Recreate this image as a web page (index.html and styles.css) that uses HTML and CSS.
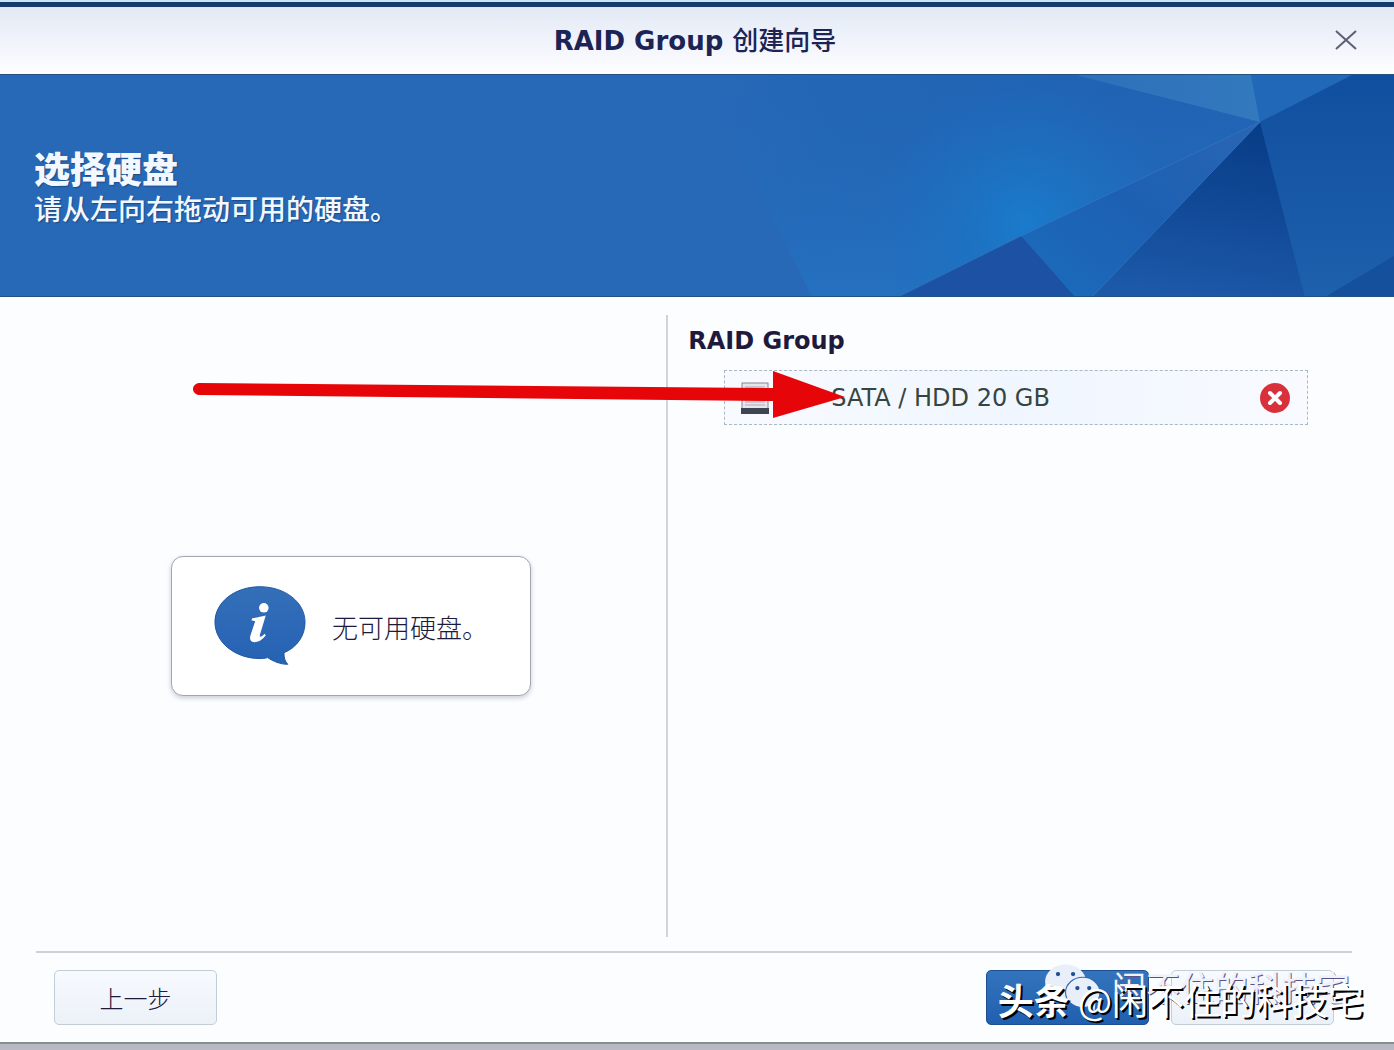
FILE: index.html
```html
<!DOCTYPE html>
<html lang="zh-CN">

<head>
  <meta charset="UTF-8">
  <title>RAID Group 创建向导</title>
  <link rel="stylesheet" href="styles.css">
</head>

<body>
  <div class="wizard">
    <header class="title-bar">
      <h1>RAID Group <span>创建向导</span></h1>
      <button class="close-btn" aria-label="关闭">
        <svg width="22" height="20" viewBox="0 0 22 20">
          <path d="M1 1L21 19M21 1L1 19" stroke="#5d5f72" stroke-width="2" fill="none" />
        </svg>
      </button>
    </header>

    <section class="banner">
      <svg class="banner-art" viewBox="0 0 734 223" preserveAspectRatio="xMaxYMid slice">
        <defs>
          <linearGradient id="sweep" gradientUnits="userSpaceOnUse" x1="60" y1="40" x2="440" y2="120">
            <stop offset="0" stop-color="#2768b7" />
            <stop offset="0.3" stop-color="#2266b5" />
            <stop offset="1" stop-color="#2062b3" />
          </linearGradient>
          <radialGradient id="glow" gradientUnits="userSpaceOnUse" cx="365" cy="150" r="150">
            <stop offset="0" stop-color="#1a7bcc" />
            <stop offset="0.4" stop-color="#1b74c4" stop-opacity="0.7" />
            <stop offset="1" stop-color="#1b6fc0" stop-opacity="0" />
          </radialGradient>
          <linearGradient id="corner" x1="0.3" y1="0" x2="0.4" y2="1">
            <stop offset="0" stop-color="#2468b8" stop-opacity="0" />
            <stop offset="1" stop-color="#2571c0" />
          </linearGradient>
          <linearGradient id="top" x1="0" y1="0" x2="1" y2="0">
            <stop offset="0" stop-color="#2e70bb" />
            <stop offset="1" stop-color="#3279bd" />
          </linearGradient>
          <linearGradient id="mid" x1="1" y1="0" x2="0" y2="1">
            <stop offset="0" stop-color="#2a65b4" />
            <stop offset="0.5" stop-color="#1d60b2" />
            <stop offset="1" stop-color="#1b6cbc" />
          </linearGradient>
          <linearGradient id="dark" x1="0.6" y1="0" x2="0.4" y2="1">
            <stop offset="0" stop-color="#083d87" />
            <stop offset="0.5" stop-color="#124a98" />
            <stop offset="1" stop-color="#1c59a8" />
          </linearGradient>
          <linearGradient id="side" x1="0" y1="0" x2="0" y2="1">
            <stop offset="0" stop-color="#104f9f" />
            <stop offset="1" stop-color="#1e60ac" />
          </linearGradient>
        </defs>
        <path d="M40 0H734V223H152Z" fill="url(#sweep)" />
        <path d="M40 0H600V48L238 223H152Z" fill="url(#corner)" />
        <path d="M152 0H600V48L361 162L238 223H152Z" fill="url(#glow)" />
        <path d="M412 0H591L600 48Z" fill="url(#top)" />
        <path d="M591 0H694L600 48Z" fill="#2169b8" />
        <path d="M694 0H734V223H645L600 48Z" fill="url(#side)" />
        <path d="M734 182V223H665Z" fill="#14509c" />
        <path d="M600 48L645 223H432Z" fill="url(#dark)" />
        <path d="M600 48L432 223H415L361 162Z" fill="url(#mid)" />
        <path d="M361 162L415 223H238Z" fill="#1c51a3" />
        <path d="M238 223L361 162L600 48L432 223" fill="none" stroke="#3b7dc4" stroke-opacity="0.5" />
      </svg>
      <div class="banner-text">
        <h2>选择硬盘</h2>
        <p>请从左向右拖动可用的硬盘。</p>
      </div>
    </section>

    <main class="content">
      <section class="available">
        <div class="message">
          <svg width="96" height="84" viewBox="0 0 96 84">
            <defs>
              <linearGradient id="bubble" x1="0" y1="0" x2="0" y2="1">
                <stop offset="0" stop-color="#346fb9" />
                <stop offset="1" stop-color="#2562b3" />
              </linearGradient>
            </defs>
            <path d="M48 1C74 1 95 17 95 38C95 52 87 64 73 70C73 75 74 79 77 82C69 82 62 79 56 75C53 76 50 76 48 76C22 76 1 59 1 38C1 17 22 1 48 1Z" fill="url(#bubble)" stroke="#1c559f" />
            <circle cx="52" cy="23" r="5" fill="#fff" />
            <path d="M40 34C45 33 49 32 54 31L48 51C47 54 49 54 53 50L54 52C50 57 46 59 42 59C38 59 37 56 38 52L43 37L39 36Z" fill="#fff" />
          </svg>
          <p>无可用硬盘。</p>
        </div>
      </section>

      <section class="group">
        <h3>RAID Group</h3>
        <div class="disk">
          <svg width="28" height="32" viewBox="0 0 28 32">
            <rect x="1" y="1" width="26" height="30" fill="#e6e4ec" stroke="#85869a" />
            <path d="M4 5H24M4 20H24M4 23H24" stroke="#b4a9b4" />
            <rect x="0" y="26" width="28" height="6" fill="#3f4550" />
          </svg>
          <span class="disk-name">SATA / HDD 20 GB</span>
          <button class="remove-btn" aria-label="移除">
            <svg width="32" height="32" viewBox="0 0 32 32">
              <circle cx="16" cy="16" r="15" fill="#d9313c" />
              <path d="M11 11L21 21M21 11L11 21" stroke="#fff" stroke-width="4" stroke-linecap="round" />
            </svg>
          </button>
        </div>
      </section>

      <svg class="arrow" width="652" height="50" viewBox="0 0 652 50">
        <path d="M6 12L580 17V0L652 26L580 47V30L6 24C-2 23 -2 13 6 12Z" fill="#e60508" />
      </svg>
    </main>

    <footer class="actions">
      <button class="btn">上一步</button>
      <div class="actions-right">
        <button class="btn btn-primary" aria-label="下一步"></button>
        <button class="btn" aria-label="取消"></button>
      </div>
      <div class="account">
        <svg width="56" height="48" viewBox="0 0 52 44">
          <ellipse cx="20" cy="17" rx="19" ry="16" fill="#e8eefa" />
          <path d="M7 26L5 36L15 31Z" fill="#e8eefa" />
          <circle cx="13" cy="10" r="2" fill="#1f4f94" />
          <circle cx="27" cy="10" r="2" fill="#1f4f94" />
          <ellipse cx="36" cy="27" rx="16" ry="14" fill="#e8eefa" stroke="#2b67b3" />
          <path d="M40 38L47 44L48 34Z" fill="#e8eefa" />
          <circle cx="31" cy="23" r="2" fill="#1f4f94" />
          <circle cx="42" cy="23" r="2" fill="#1f4f94" />
        </svg>
        <span>闲不住的科技宅</span>
      </div>
      <p class="byline"><b>头条</b> @闲不住的科技宅</p>
    </footer>
  </div>
</body>

</html>
```
FILE: styles.css
```css
* {
  box-sizing: border-box;
}

body {
  margin: 0;
  font-family: "DejaVu Sans", "Noto Sans CJK SC", sans-serif;
  font-size: 24px;
  color: #1d1a3c;
  background-color: #b9b9c3;
}

h1,
h2,
h3,
p {
  margin: 0;
}

button {
  font-family: inherit;
  cursor: pointer;
}

svg {
  display: block;
}

.wizard {
  display: flex;
  flex-direction: column;
  min-height: calc(100vh - 6px);
  background-color: #fcfdff;
  border-top: 2px solid #c4e8f6;
  border-bottom: 2px solid #848f94;
}

.title-bar {
  display: flex;
  align-items: center;
  justify-content: center;
  position: relative;
  height: 72px;
  padding: 0 4px 2px 0;
  border-top: 5px solid #163c6e;
  background: linear-gradient(#e2e9f4, #f3f5fc 60%, #fff);
}

.title-bar h1 {
  font-size: 26px;
  line-height: 36px;
  color: #1b2455;
}

/* the Chinese part of the title is lighter than the Latin part */
.title-bar h1 span {
  font-family: "Noto Sans CJK SC", sans-serif;
  font-weight: 500;
}

.close-btn {
  position: absolute;
  right: 33px;
  padding: 4px;
  border: none;
  background: none;
}

.banner {
  position: relative;
  display: flex;
  align-items: center;
  height: 223px;
  padding: 2px 34px 0;
  color: #f2f8ff;
  background-color: #2768b7;
  border-top: 1px solid #235283;
  border-bottom: 1px solid #235283;
}

.banner-art {
  position: absolute;
  top: 0;
  right: 0;
  width: 734px;
  height: 100%;
}

.banner-text {
  position: relative;
  font-family: "Noto Sans CJK SC", sans-serif;
  text-shadow: 1px 1px 1px #1c4a88;
}

.banner-text h2 {
  font-size: 36px;
  font-weight: 900;
  line-height: 42px;
}

.banner-text p {
  font-size: 28px;
  font-weight: 500;
  line-height: 40px;
}

.content {
  display: grid;
  grid-template-columns: 11fr 12fr;
  flex: 1;
  position: relative;
  padding: 18px 36px 14px;
}

.available {
  display: flex;
  align-items: center;
  justify-content: center;
  border-right: 2px solid #cfd3da;
}

.message {
  display: flex;
  align-items: center;
  gap: 26px;
  width: 360px;
  height: 140px;
  padding: 0 42px;
  border: 1px solid #a0a7b4;
  border-radius: 12px;
  background-color: #fff;
  box-shadow: 0 2px 5px #c9cbd6;
}

.message p {
  font-family: "Noto Sans CJK SC", sans-serif;
  font-size: 26px;
  font-weight: 300;
  white-space: nowrap;
}

.group {
  padding: 8px 50px 0 20px;
}

.group h3 {
  font-size: 24px;
  line-height: 36px;
}

.disk {
  display: flex;
  align-items: center;
  height: 55px;
  margin: 11px 0 0 36px;
  padding: 0 16px;
  border: 1px dashed #a9b8c4;
  background: linear-gradient(90deg, #f8faff, #f0f6ff 50%, #f8faff);
}

.disk-name {
  flex: 1;
  margin-left: 62px;
  color: #36463f;
}

.remove-btn {
  padding: 0;
  border: none;
  background: none;
}

.arrow {
  position: absolute;
  top: 74px;
  left: 193px;
}

.actions {
  display: flex;
  justify-content: space-between;
  position: relative;
  margin: 0 42px 0 36px;
  padding: 17px 18px;
  border-top: 2px solid #cbd1d7;
}

.actions-right {
  display: flex;
  gap: 22px;
}

.btn {
  width: 163px;
  height: 55px;
  border: 1px solid #c2cdd6;
  border-radius: 5px;
  background: linear-gradient(#f7faff, #ecf1f8);
  font-family: "Noto Sans CJK SC", sans-serif;
  font-size: 24px;
  font-weight: 300;
  color: #1d1a3c;
}

.btn-primary {
  border-color: #1d4f92;
  background: linear-gradient(#3474bd, #205fae);
}

.account {
  display: flex;
  align-items: center;
  gap: 12px;
  position: absolute;
  top: 10px;
  right: 2px;
  font-family: "Noto Sans CJK SC", sans-serif;
  font-size: 34px;
  line-height: 44px;
  color: #eef2fb;
  text-shadow: 1px 1px 0 #5b5185;
  white-space: nowrap;
}

.byline {
  position: absolute;
  top: 22px;
  right: -12px;
  font-family: "Noto Sans CJK SC", sans-serif;
  font-size: 36px;
  line-height: 48px;
  color: #fff;
  text-shadow: 2px 2px 0 #000;
  white-space: nowrap;
}
```
